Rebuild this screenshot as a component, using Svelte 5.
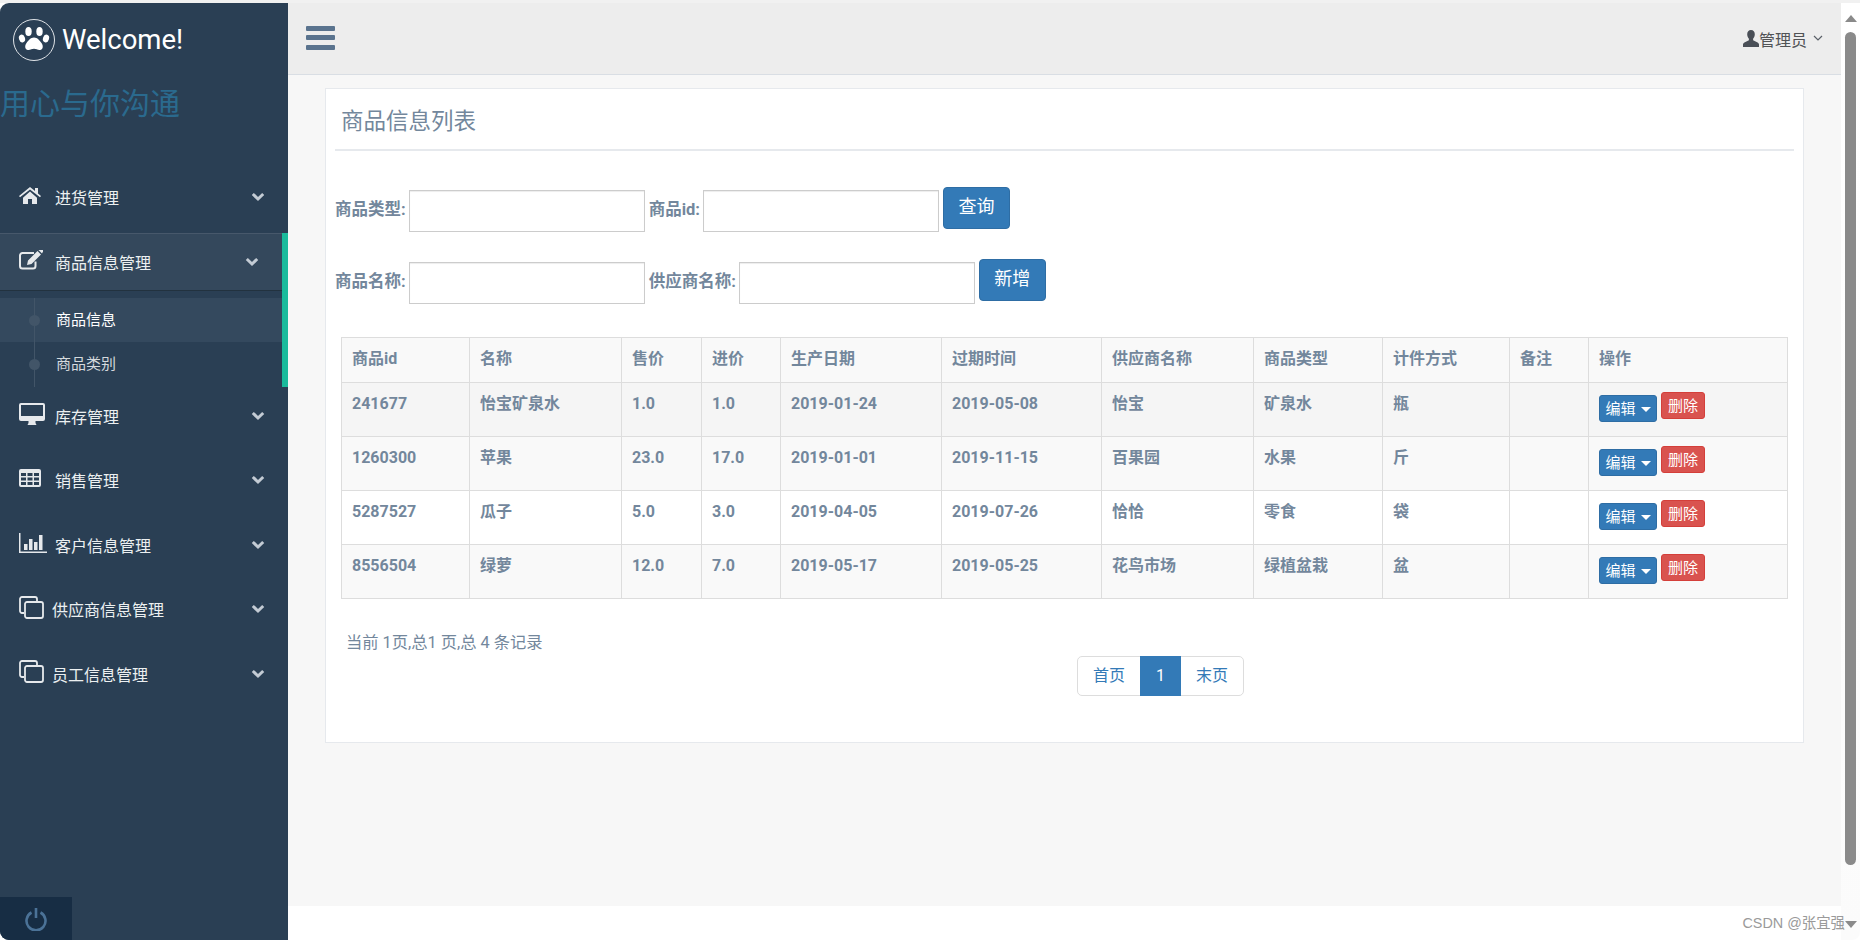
<script>
	const menu = [
		{ name: '进货管理', icon: 'home' },
		{ name: '商品信息管理', icon: 'edit', open: true, subs: ['商品信息', '商品类别'] },
		{ name: '库存管理', icon: 'desktop' },
		{ name: '销售管理', icon: 'table' },
		{ name: '客户信息管理', icon: 'chart' },
		{ name: '供应商信息管理', icon: 'clone', narrow: true },
		{ name: '员工信息管理', icon: 'clone', narrow: true }
	];

	const columns = ['商品id', '名称', '售价', '进价', '生产日期', '过期时间', '供应商名称', '商品类型', '计件方式', '备注', '操作'];
	const widths = [128, 152, 80, 79, 161, 160, 152, 129, 127, 79, 199];

	const rows = [
		['241677', '怡宝矿泉水', '1.0', '1.0', '2019-01-24', '2019-05-08', '怡宝', '矿泉水', '瓶', ''],
		['1260300', '苹果', '23.0', '17.0', '2019-01-01', '2019-11-15', '百果园', '水果', '斤', ''],
		['5287527', '瓜子', '5.0', '3.0', '2019-04-05', '2019-07-26', '恰恰', '零食', '袋', ''],
		['8556504', '绿萝', '12.0', '7.0', '2019-05-17', '2019-05-25', '花鸟市场', '绿植盆栽', '盆', '']
	];
</script>

{#snippet chevron()}
	<svg class="chevron" width="14" height="10" viewBox="0 0 14 10">
		<polyline points="1.8,2 7,7 12.2,2" fill="none" stroke="#c3cbd4" stroke-width="3" />
	</svg>
{/snippet}

{#snippet icon(name)}
	{#if name === 'home'}
		<svg width="22" height="17" viewBox="0 0 22 17" fill="#e6e9ec">
			<path d="M11 0 0 9l1 1.2L11 2.6l10 7.6L22 9l-3-2.5V1h-3v3z" />
			<path d="M4 10.8 11 4.6 18 10.8V17h-5v-5H9v5H4z" />
		</svg>
	{:else if name === 'edit'}
		<svg width="24" height="20" viewBox="0 0 24 20">
			<path d="M16.5 11.5V16a2.5 2.5 0 0 1-2.5 2.5H3.5A2.5 2.5 0 0 1 1 16V5.5A2.5 2.5 0 0 1 3.5 3H15" fill="none" stroke="#e6e9ec" stroke-width="2" />
			<path d="M9 10.5 18.5 1l3.5 3.5-9.5 9.5-4.5 1zM19.5 0l1-.5a1.5 1.5 0 0 1 3 3l-.5 1z" fill="#e6e9ec" />
		</svg>
	{:else if name === 'desktop'}
		<svg width="26" height="22" viewBox="0 0 26 22" fill="#e6e9ec">
			<path fill-rule="evenodd" d="M2 0h22a2 2 0 0 1 2 2v14a2 2 0 0 1-2 2H2a2 2 0 0 1-2-2V2a2 2 0 0 1 2-2zm0 2v11h22V2z" />
			<path d="M9.5 18h7v2l1 2h-9l1-2z" />
		</svg>
	{:else if name === 'table'}
		<svg width="22" height="18" viewBox="0 0 22 18" fill="#e6e9ec">
			<path fill-rule="evenodd" d="M2 0h18a2 2 0 0 1 2 2v14a2 2 0 0 1-2 2H2a2 2 0 0 1-2-2V2a2 2 0 0 1 2-2zM2 4v3h5V4zm6.5 0v3h5V4zM15 4v3h5V4zM2 8.5v3h5v-3zm6.5 0v3h5v-3zm6.5 0v3h5v-3zM2 13v3h5v-3zm6.5 0v3h5v-3zm6.5 0v3h5v-3z" />
		</svg>
	{:else if name === 'chart'}
		<svg width="28" height="20" viewBox="0 0 28 20" fill="#e6e9ec">
			<path d="M0 0h1.5v18.5H28V20H0z" />
			<path d="M5 11h3.5v6H5zM10 6h3.5v11H10zM15 9h3.5v8H15zM20 2h3.5v15H20z" />
		</svg>
	{:else}
		<svg width="25" height="23" viewBox="0 0 25 23" fill="none" stroke="#e6e9ec" stroke-width="1.8">
			<path d="M5 17H3a2 2 0 0 1-2-2V3a2 2 0 0 1 2-2h13a2 2 0 0 1 2 2v2" />
			<rect x="6" y="6" width="18" height="16" rx="2" />
		</svg>
	{/if}
{/snippet}

<div class="strip"></div>
<div class="window">
	<aside class="sidebar">
		<div class="brand">
			<span class="logo">
				<svg width="42" height="42" viewBox="0 0 42 42">
					<circle cx="21" cy="21" r="20.5" fill="none" stroke="#dfe3e7" stroke-width="1" />
					<g fill="#fff">
						<ellipse cx="15.5" cy="12.5" rx="3.2" ry="4.5" />
						<ellipse cx="26.5" cy="12.5" rx="3.2" ry="4.5" />
						<ellipse cx="9" cy="19.5" rx="3" ry="4" transform="rotate(-18 9 19.5)" />
						<ellipse cx="33" cy="19.5" rx="3" ry="4" transform="rotate(18 33 19.5)" />
						<path d="M21 18.5c3.5 0 5.5 3 7.5 5.5 1.8 2.2 2 6.5-1.5 7-2.2.3-3.8-1.2-6-1.2s-3.8 1.5-6 1.2c-3.5-.5-3.3-4.8-1.5-7 2-2.5 4-5.5 7.5-5.5z" />
					</g>
				</svg>
			</span>
			<span class="welcome">Welcome!</span>
		</div>
		<div class="slogan">用心与你沟通</div>

		<ul class="nav">
			{#each menu as item}
				<li class:open={item.open}>
					<div class="nav-link">
						<span class="ico" class:narrow={item.narrow}>{@render icon(item.icon)}</span>
						<span class="nav-text">{item.name}</span>
						{@render chevron()}
					</div>
					{#if item.subs}
						<ul class="sub">
							{#each item.subs as sub, i}
								<li class:current={i === 0}><span class="dot"></span>{sub}</li>
							{/each}
						</ul>
					{/if}
				</li>
			{/each}
		</ul>

		<div class="side-footer">
			<svg width="22" height="24" viewBox="0 0 22 24" fill="none" stroke="#4b7297" stroke-width="2.6">
				<path d="M6.5 5.5a9.5 9.5 0 1 0 9 0" />
				<path d="M11 1v10" />
			</svg>
		</div>
	</aside>

	<div class="main">
		<header class="topbar">
			<div class="burger"><i></i><i></i><i></i></div>
			<div class="user">
				<svg width="16" height="17" viewBox="0 0 16 17" fill="#4a4f57">
					<path d="M8 0c2.4 0 3.8 1.8 3.8 4.3 0 1.8-.7 3.4-1.7 4.4v1.5l4.5 2.3c.9.5 1.4 1.2 1.4 2V17H0v-2.5c0-.8.5-1.5 1.4-2l4.5-2.3V8.7C4.900 7.700 4.200 6.100 4.200 4.300 4.200 1.800 5.600 0 8 0z" />
				</svg>
				<span>管理员</span>
				<svg class="caret" width="10" height="6" viewBox="0 0 10 6">
					<polyline points="1,1 5,5 9,1" fill="none" stroke="#5a6068" stroke-width="1.2" />
				</svg>
			</div>
		</header>

		<div class="content">
			<section class="card">
				<h2 class="card-title">商品信息列表</h2>

				<div class="form-row first">
					<label for="f-type">商品类型:</label>
					<input id="f-type" type="text" />
					<label for="f-id">商品id:</label>
					<input id="f-id" type="text" />
					<button type="button" class="btn">查询</button>
				</div>
				<div class="form-row">
					<label for="f-name">商品名称:</label>
					<input id="f-name" type="text" />
					<label for="f-sup">供应商名称:</label>
					<input id="f-sup" type="text" />
					<button type="button" class="btn">新增</button>
				</div>

				<table>
					<colgroup>
						{#each widths as w}
							<col style="width: {w}px" />
						{/each}
					</colgroup>
					<thead>
						<tr>
							{#each columns as c}
								<th>{c}</th>
							{/each}
						</tr>
					</thead>
					<tbody>
						{#each rows as row}
							<tr>
								{#each row as cell}
									<td>{cell}</td>
								{/each}
								<td>
									<div class="ops">
										<span class="op edit">编辑<i class="tri"></i></span>
										<span class="op del">删除</span>
									</div>
								</td>
							</tr>
						{/each}
					</tbody>
				</table>

				<p class="page-info">当前 1页,总1 页,总 4 条记录</p>
				<div class="pager">
					<span>首页</span>
					<span class="active">1</span>
					<span>末页</span>
				</div>
			</section>
		</div>
	</div>

	<div class="scroll">
		<i class="up"></i>
		<div class="thumb"></div>
		<i class="down"></i>
	</div>

	<div class="mark">CSDN @张宜强</div>
</div>

<style>
	:global(body) {
		margin: 0;
		background: #fff;
		overflow: hidden;
	}

	.strip {
		height: 3px;
		background: #f1f1f1;
	}

	.window {
		position: relative;
		display: flex;
		height: 937px;
		font-family: Roboto, 'Noto Sans CJK SC', sans-serif;
		font-size: 16px;
		color: #73879c;
	}

	.sidebar {
		width: 288px;
		flex: none;
		display: flex;
		flex-direction: column;
		background: #2a3f54;
		border-radius: 9px 0 0 9px;
		overflow: hidden;
		color: #ecf0f1;
	}

	.brand {
		height: 74px;
		display: flex;
		align-items: center;
		padding-left: 13px;
		flex: none;
	}

	.logo {
		display: flex;
		width: 49px;
		flex: none;
	}

	.welcome {
		font-size: 27.5px;
		color: #fff;
		margin-bottom: 2px;
	}

	.slogan {
		height: 54px;
		line-height: 54px;
		font-size: 30px;
		color: #2a6a8e;
		flex: none;
	}

	.nav {
		list-style: none;
		margin: 37px 0 0;
		padding: 0;
	}

	.nav > li {
		margin-bottom: 6.5px;
	}

	.nav > li.open {
		margin-bottom: 0;
		border-right: 6px solid #1abb9c;
	}

	.nav-link {
		height: 58px;
		display: flex;
		align-items: center;
		padding: 0 23px 0 19px;
		box-sizing: border-box;
	}

	.open .nav-link {
		background: #34485c;
		border-top: 1px solid #47586b;
		border-bottom: 1px solid #22323f;
	}

	.ico {
		width: 36px;
		flex: none;
		display: flex;
		position: relative;
		top: -2px;
	}

	.ico.narrow {
		width: 33px;
	}

	.nav-text {
		font-size: 16px;
		flex: 1;
	}

	.chevron {
		flex: none;
	}

	.sub {
		list-style: none;
		margin: 0;
		padding: 7px 0 0;
		position: relative;
	}

	.sub::before {
		content: '';
		position: absolute;
		left: 34px;
		top: 7px;
		bottom: 0;
		width: 1px;
		background: #425568;
		z-index: 1;
	}

	.sub li {
		position: relative;
		height: 44.5px;
		line-height: 44px;
		padding-left: 56px;
		font-size: 15px;
		color: #d5dade;
	}

	.sub li.current {
		background: #34495e;
		color: #fff;
	}

	.dot {
		position: absolute;
		left: 29px;
		top: 17px;
		width: 11px;
		height: 11px;
		border-radius: 50%;
		background: #425568;
		z-index: 1;
	}

	.side-footer {
		margin-top: auto;
		width: 72px;
		height: 43px;
		background: #172d44;
		display: flex;
		align-items: center;
		justify-content: center;
		flex: none;
	}

	.main {
		flex: 1;
		min-width: 0;
		display: flex;
		flex-direction: column;
	}

	.topbar {
		height: 72px;
		flex: none;
		box-sizing: border-box;
		background: #ededed;
		border-bottom: 1px solid #d9dee4;
		display: flex;
		align-items: center;
		justify-content: space-between;
		padding: 0 18px;
	}

	.burger {
		display: flex;
		flex-direction: column;
		gap: 4.5px;
		width: 29px;
		margin-bottom: 2px;
	}

	.burger i {
		display: block;
		height: 5px;
		border-radius: 1px;
		background: #5a738e;
	}

	.user {
		display: flex;
		align-items: center;
		color: #515356;
		font-size: 16px;
	}

	.caret {
		margin-left: 6px;
		margin-bottom: 2px;
	}

	.content {
		height: 831px;
		flex: none;
		box-sizing: border-box;
		background: #f7f7f7;
		padding: 13px 37px 0;
	}

	.card {
		height: 655px;
		box-sizing: border-box;
		background: #fff;
		border: 1px solid #e6e9ed;
		padding: 0 9px;
	}

	.card-title {
		margin: 0;
		height: 62px;
		box-sizing: border-box;
		padding: 16px 0 0 6px;
		font-size: 22.5px;
		line-height: 32px;
		font-weight: 400;
		color: #73879c;
		border-bottom: 2px solid #e6e9ed;
	}

	.form-row {
		display: flex;
		align-items: flex-start;
		margin-top: 27px;
		height: 45px;
	}

	.form-row.first {
		margin-top: 36px;
	}

	label {
		font-weight: 700;
		height: 42px;
		line-height: 40px;
		margin: 3px 3px 0 0;
		white-space: nowrap;
		font-size: 16.5px;
	}

	input {
		width: 236px;
		height: 42px;
		box-sizing: border-box;
		margin: 3px 4px 0 0;
		border: 1px solid #ccc;
		box-shadow: inset 0 1px 1px rgba(0, 0, 0, 0.075);
		background: #fff;
		padding: 0;
	}

	.btn {
		width: 67px;
		height: 42px;
		box-sizing: border-box;
		background: #337ab7;
		border: 1px solid #2e6da4;
		border-radius: 4px;
		color: #fff;
		font: inherit;
		font-size: 18px;
		line-height: 36px;
		padding: 0 0 3px;
	}

	table {
		table-layout: fixed;
		border-collapse: collapse;
		width: 1446px;
		margin: 33px 6px 0;
		font-weight: 700;
	}

	th,
	td {
		border: 1px solid #ddd;
		padding: 10px 10px 0;
		box-sizing: border-box;
		text-align: left;
		vertical-align: top;
		line-height: 22px;
		font-size: 16px;
	}

	th {
		height: 45px;
		background: #f9f9f9;
	}

	td {
		height: 54px;
	}

	tbody tr:nth-child(1) {
		background: #f5f5f5;
	}

	tbody tr:nth-child(even) {
		background: #f9f9f9;
	}

	.ops {
		display: flex;
		align-items: flex-start;
		gap: 4px;
		margin-top: -1px;
	}

	.op {
		height: 27px;
		box-sizing: border-box;
		border-radius: 3px;
		color: #fff;
		font-size: 15px;
		font-weight: 400;
		line-height: 24px;
		display: flex;
		align-items: center;
		justify-content: center;
	}

	.op.edit {
		width: 58px;
		margin-top: 3px;
		background: #337ab7;
		border: 1px solid #2e6da4;
	}

	.op.del {
		width: 44px;
		background: #d9534f;
		border: 1px solid #d43f3a;
	}

	.tri {
		width: 0;
		height: 0;
		margin: 2px 0 0 5px;
		border-left: 5px solid transparent;
		border-right: 5px solid transparent;
		border-top: 5px solid #fff;
	}

	.page-info {
		margin: 32px 0 0 11px;
		line-height: 24px;
		font-size: 16.3px;
		color: #73879c;
	}

	.pager {
		display: flex;
		width: 167px;
		height: 40px;
		box-sizing: border-box;
		margin: 1px 0 0 742px;
		border: 1px solid #ddd;
		border-radius: 5px;
		color: #337ab7;
		line-height: 38px;
		text-align: center;
	}

	.pager span {
		width: 62px;
	}

	.pager span.active {
		width: 41px;
		margin: -1px 0;
		height: 40px;
		line-height: 40px;
		background: #337ab7;
		color: #fff;
	}

	.scroll {
		width: 19px;
		flex: none;
		display: flex;
		flex-direction: column;
		align-items: center;
		background: linear-gradient(#fff, #fbfbfb);
		border-radius: 0 8px 8px 0;
		position: relative;
	}

	.up,
	.down {
		width: 0;
		height: 0;
		border-left: 6.5px solid transparent;
		border-right: 6.5px solid transparent;
	}

	.up {
		margin-top: 12px;
		border-bottom: 7px solid #8a8a8a;
	}

	.down {
		margin-top: 56px;
		border-top: 7px solid #8a8a8a;
	}

	.thumb {
		width: 11px;
		height: 833px;
		margin-top: 10px;
		border-radius: 6px;
		background: #8a8a8a;
	}

	.mark {
		position: absolute;
		right: 15px;
		bottom: 7px;
		font-family: 'Liberation Sans', 'Noto Sans CJK SC', sans-serif;
		font-size: 14.4px;
		line-height: 20px;
		color: #9a9a9a;
	}
</style>
